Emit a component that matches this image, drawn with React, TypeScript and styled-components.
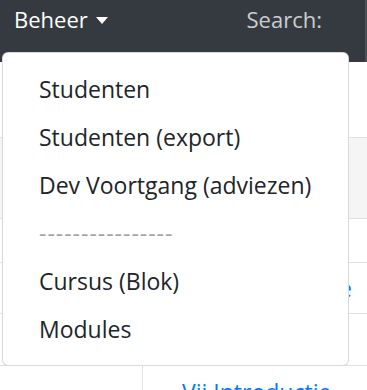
import React from "react";
import styled, { createGlobalStyle } from "styled-components";

const GlobalStyle = createGlobalStyle`
	html, body {
		margin: 0;
		padding: 0;
		background: #fff;
	}
	body {
		font-family: "Open Sans", "Noto Sans", sans-serif;
		color: #212529;
		overflow: hidden;
	}
`;

const Page = styled.div`
	position: relative;
	width: 367px;
	height: 390px;
	overflow: hidden;
`;

const Navbar = styled.nav`
	height: 62px;
	background-color: #343a40;
	display: flex;
	align-items: flex-start;
	justify-content: space-between;
	padding-left: 14px;
	box-sizing: border-box;
`;

const NavToggle = styled.a`
	display: flex;
	align-items: center;
	gap: 8px;
	color: #fff;
	font-size: 22px;
	line-height: 36px;
	padding-top: 1px;
	text-decoration: none;
`;

const Caret = styled.span`
	display: inline-block;
	width: 0;
	height: 0;
	border-top: 7px solid #fff;
	border-left: 6px solid transparent;
	border-right: 6px solid transparent;
	margin-top: 2px;
`;

const SearchArea = styled.div`
	display: flex;
	align-items: flex-start;
	gap: 43px;
`;

const SearchLabel = styled.span`
	color: rgba(255, 255, 255, 0.75);
	font-size: 22px;
	line-height: 36px;
	padding-top: 1px;
`;

const SearchInput = styled.div`
	width: 2px;
	height: 62px;
	background: #4a5057;
`;

const Content = styled.div`
	padding-top: 75px;
`;

const Table = styled.div`
	display: grid;
	grid-template-columns: 143px 1fr;
`;

const HeadCell = styled.div`
	height: 80px;
	background: #f5f5f5;
	border-top: 1px solid #dee2e6;
	border-bottom: 1px solid #dee2e6;
`;

const Cell = styled.div<{ $h: number; $first?: boolean; $last?: boolean }>`
	height: ${({ $h }) => $h}px;
	border-bottom: ${({ $last }) => ($last ? "none" : "1px solid #dee2e6")};
	border-right: ${({ $first }) => ($first ? "1px solid #dee2e6" : "none")};
	display: flex;
	align-items: ${({ $last }) => ($last ? "flex-start" : "center")};
	justify-content: ${({ $last }) => ($last ? "flex-start" : "flex-end")};
	padding: ${({ $last }) => ($last ? "11px 15px 0 39px" : "0 15px 0 39px")};
	box-sizing: border-box;
	font-size: 23px;
	line-height: 30px;
	white-space: nowrap;
	overflow: hidden;
`;

const RowLink = styled.a`
	color: #007bff;
	text-decoration: none;
`;

const Dropdown = styled.div`
	position: absolute;
	top: 52px;
	left: 2px;
	width: 347px;
	box-sizing: border-box;
	background: #fff;
	border: 1px solid rgba(0, 0, 0, 0.15);
	border-radius: 6px;
	padding: 12px 0;
	display: flex;
	flex-direction: column;
`;

const DropdownItem = styled.a<{ $muted?: boolean }>`
	display: block;
	padding: 6px 36px;
	font-size: 23px;
	line-height: 36px;
	color: ${({ $muted }) => ($muted ? "#a0a4a8" : "#212529")};
	letter-spacing: ${({ $muted }) => ($muted ? "1px" : "normal")};
	text-decoration: none;
	white-space: nowrap;
`;

const menu = [
	{ label: "Studenten" },
	{ label: "Studenten (export)" },
	{ label: "Dev Voortgang (adviezen)" },
	{ label: "----------------", muted: true },
	{ label: "Cursus (Blok)" },
	{ label: "Modules" },
];

const App: React.FC = () => {
	return (
		<Page>
			<GlobalStyle />
			<Navbar>
				<NavToggle href="#">
					Beheer
					<Caret />
				</NavToggle>
				<SearchArea>
					<SearchLabel>Search:</SearchLabel>
					<SearchInput />
				</SearchArea>
			</Navbar>
			<Content>
				<Table>
					<HeadCell />
					<HeadCell />
					<Cell $h={44} $first />
					<Cell $h={44} />
					<Cell $h={51} $first />
					<Cell $h={51}>
						<RowLink>Module</RowLink>
					</Cell>
					<Cell $h={52} $first />
					<Cell $h={52} />
					<Cell $h={60} $first $last />
					<Cell $h={60} $last>
						<RowLink>Vij Introductie</RowLink>
					</Cell>
				</Table>
			</Content>
			<Dropdown>
				{menu.map((m) => (
					<DropdownItem key={m.label} href="#" $muted={m.muted}>
						{m.label}
					</DropdownItem>
				))}
			</Dropdown>
		</Page>
	);
};

export default App;
